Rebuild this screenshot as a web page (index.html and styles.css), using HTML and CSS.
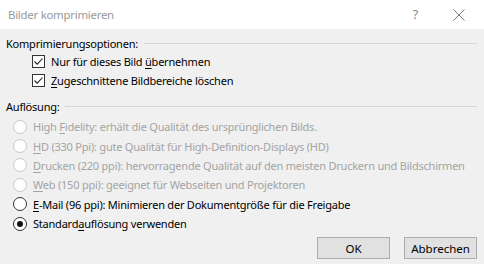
FILE: index.html
```html
<!DOCTYPE html>
<html lang="de">
<head>
<meta charset="utf-8">
<title>Bilder komprimieren</title>
<link rel="stylesheet" href="styles.css">
</head>
<body>
<div class="dialog">
  <div class="titlebar">
    <span class="title">Bilder komprimieren</span>
    <span class="help">?</span>
    <svg class="close" width="12" height="12" viewBox="0 0 12 12"><path d="M0.5 0.5 L11.5 11.5 M11.5 0.5 L0.5 11.5" stroke="#777" stroke-width="1" fill="none"/></svg>
  </div>
  <div class="content">
    <div class="group-head"><span>Komprimierungsoptionen:</span><span class="rule"></span></div>
    <div class="checks">
      <div class="row"><span class="cb"><svg width="11" height="11" viewBox="0 0 11 11"><path d="M1.5 5.5 L4.2 8.2 L9.5 2.5" stroke="#222" stroke-width="1.1" fill="none"/></svg></span><span>Nur für dieses Bild <u>ü</u>bernehmen</span></div>
      <div class="row"><span class="cb"><svg width="11" height="11" viewBox="0 0 11 11"><path d="M1.5 5.5 L4.2 8.2 L9.5 2.5" stroke="#222" stroke-width="1.1" fill="none"/></svg></span><span><u>Z</u>ugeschnittene Bildbereiche löschen</span></div>
    </div>
    <div class="group-head second"><span>Auflösung:</span><span class="rule"></span></div>
    <div class="radios">
      <div class="row disabled"><span class="rb"></span><span>High <u>F</u>idelity: erhält die Qualität des ursprünglichen Bilds.</span></div>
      <div class="row disabled"><span class="rb"></span><span><u>H</u>D (330 Ppi): gute Qualität für High-Definition-Displays (HD)</span></div>
      <div class="row disabled"><span class="rb"></span><span><u>D</u>rucken (220 ppi): hervorragende Qualität auf den meisten Druckern und Bildschirmen</span></div>
      <div class="row disabled"><span class="rb"></span><span><u>W</u>eb (150 ppi): geeignet für Webseiten und Projektoren</span></div>
      <div class="row"><span class="rb"></span><span><u>E</u>-Mail (96 ppi): Minimieren der Dokumentgröße für die Freigabe</span></div>
      <div class="row"><span class="rb checked"></span><span>Standard<u>a</u>uflösung verwenden</span></div>
    </div>
    <div class="buttons">
      <button class="btn">OK</button>
      <button class="btn">Abbrechen</button>
    </div>
  </div>
</div>
</body>
</html>
```
FILE: styles.css
```css
* { box-sizing: border-box; }
html, body { margin: 0; padding: 0; }
body {
  width: 484px;
  height: 264px;
  background: #f0f0f0;
  font-family: "Noto Sans", "Open Sans", sans-serif;
  font-size: 11px;
  letter-spacing: -0.22px;
  color: #000;
  overflow: hidden;
}
.dialog { width: 484px; height: 264px; display: flex; flex-direction: column; }
.titlebar {
  height: 29px;
  background: #fff;
  display: flex;
  align-items: center;
  padding-left: 8px;
}
.title { color: #999; font-size: 11.4px; letter-spacing: -0.25px; flex: 1; }
.help { color: #888; font-size: 12.5px; margin-right: 35px; }
.close { margin-right: 19px; }
.content { flex: 1; padding: 6px 7px 0 6px; display: flex; flex-direction: column; }
.group-head { display: flex; align-items: center; height: 17px; }
.group-head .rule { flex: 1; border-top: 1px solid #d7d7d7; margin-left: 6px; }
.group-head.second { margin-top: 7px; height: 18px; }
.checks { padding-left: 26px; }
.row { display: flex; align-items: center; height: 19px; white-space: nowrap; }
.cb {
  width: 13px; height: 13px;
  border: 1px solid #333;
  background: #fff;
  display: flex; align-items: center; justify-content: center;
  margin-right: 6px;
}
.cb svg { display: block; }
.radios { margin-top: 2px; padding-left: 7px; }
.radios .row { height: 19.4px; }
.rb {
  width: 14px; height: 14px;
  border: 1px solid #333;
  border-radius: 50%;
  background: #fff;
  margin-right: 6px;
  position: relative;
  flex: none;
}
.rb.checked::after {
  content: "";
  position: absolute;
  left: 3px; top: 3px;
  width: 6px; height: 6px;
  border-radius: 50%;
  background: #111;
}
.row.disabled { color: #a4a4a4; }
.row.disabled .rb { border-color: #c8c8c8; }
u { text-decoration-thickness: 1px; text-underline-offset: 2px; }
.buttons {
  margin-top: auto;
  margin-bottom: 5px;
  display: flex;
  justify-content: flex-end;
  gap: 14px;
}
.btn {
  width: 73px; height: 22px;
  background: #e1e1e1;
  border: 1px solid #adadad;
  font-family: inherit;
  font-size: 11.5px;
  letter-spacing: 0;
  color: #000;
  padding: 0;
}
```
